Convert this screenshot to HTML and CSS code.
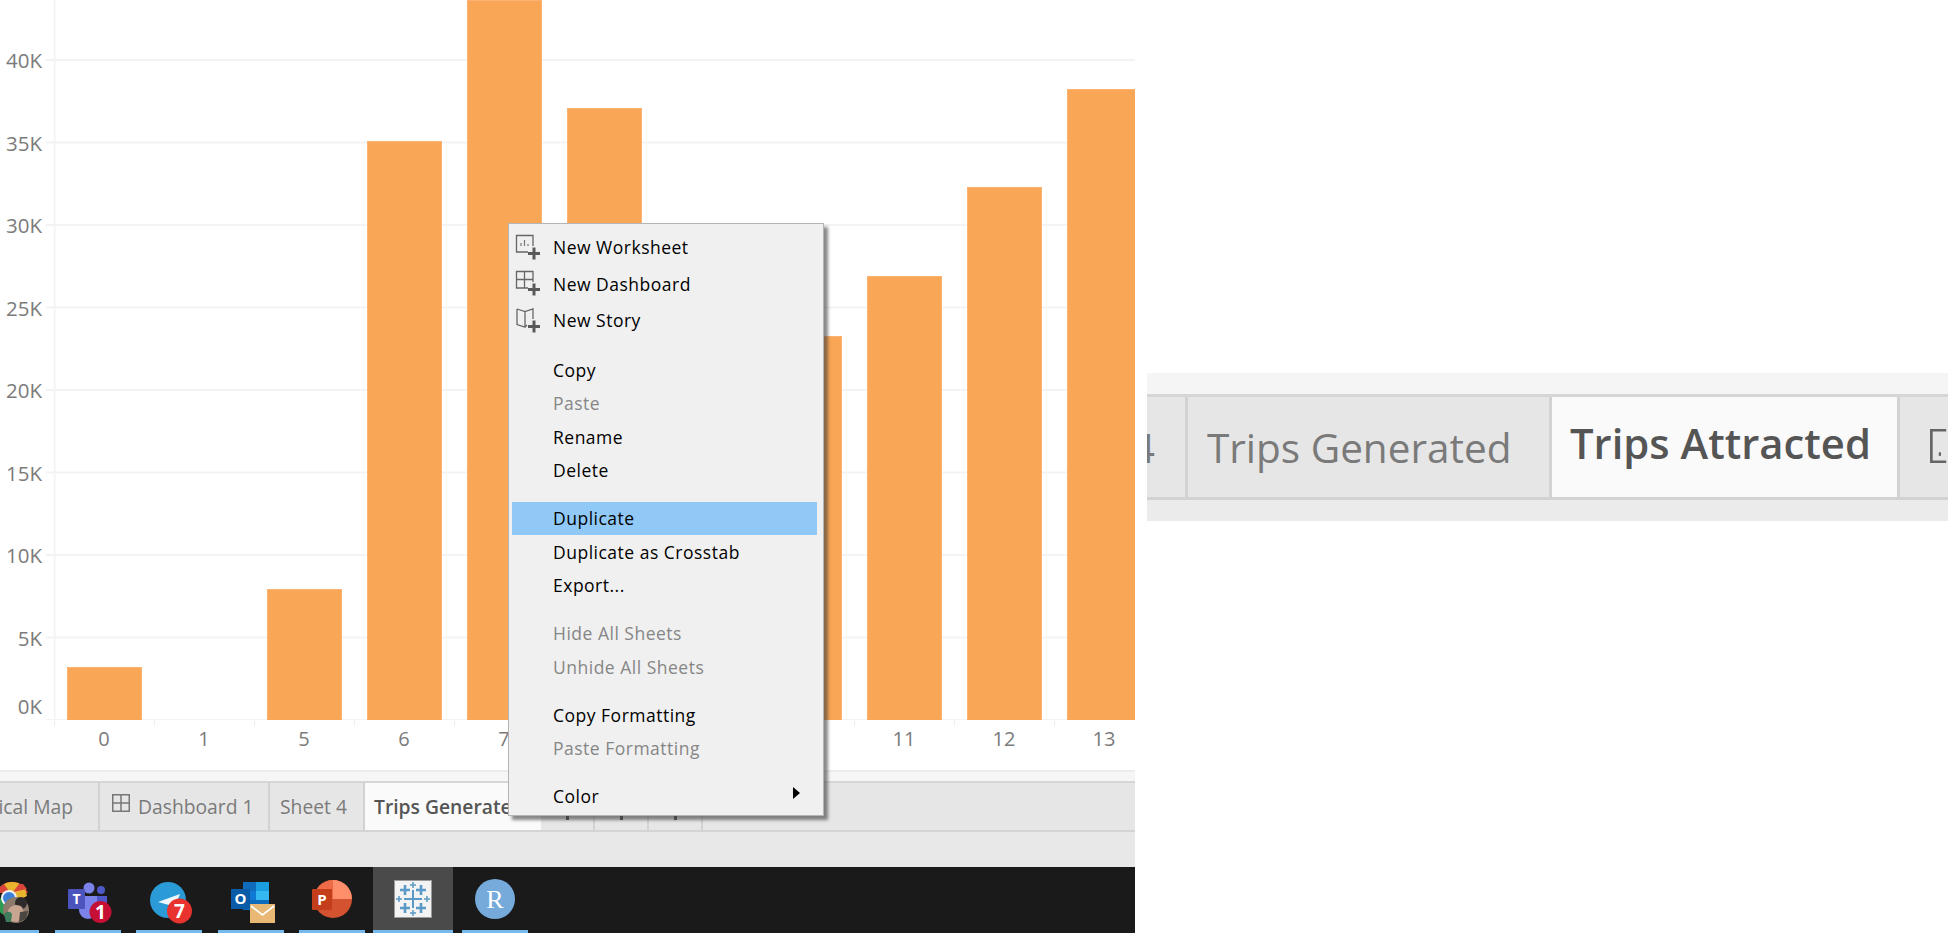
FILE: index.html
```html
<!DOCTYPE html>
<html lang="en">
<head>
<meta charset="utf-8">
<title>Trips Attracted</title>
<link rel="stylesheet" href="styles.css">
</head>
<body>
<main class="screen">
  <section class="app">
    <div class="chart">
      <div class="yaxis">
        <span class="ylabel">40K</span><span class="ylabel">35K</span><span class="ylabel">30K</span><span class="ylabel">25K</span>
        <span class="ylabel">20K</span><span class="ylabel">15K</span><span class="ylabel">10K</span><span class="ylabel">5K</span>
        <span class="ylabel zero">0K</span>
      </div>
      <div class="plotwrap">
        <div class="plot">
          <div class="col"><div class="bar" style="height:53px"></div></div>
          <div class="col"></div>
          <div class="col"><div class="bar" style="height:131px"></div></div>
          <div class="col"><div class="bar" style="height:579px"></div></div>
          <div class="col"><div class="bar" style="height:720px"></div></div>
          <div class="col"><div class="bar" style="height:612px"></div></div>
          <div class="col"><div class="bar" style="height:440px"></div></div>
          <div class="col"><div class="bar" style="height:384px"></div></div>
          <div class="col"><div class="bar" style="height:444px"></div></div>
          <div class="col"><div class="bar" style="height:533px"></div></div>
          <div class="col"><div class="bar" style="height:631px"></div></div>
        </div>
        <div class="xaxis">
          <span class="xlabel">0</span><span class="xlabel">1</span><span class="xlabel">5</span><span class="xlabel">6</span>
          <span class="xlabel">7</span><span class="xlabel"></span><span class="xlabel"></span><span class="xlabel"></span>
          <span class="xlabel">11</span><span class="xlabel">12</span><span class="xlabel">13</span>
        </div>
      </div>
    </div>
    <div class="strip"></div>
    <div class="tabs">
      <div class="tab tab-clip"><span class="tab-text">Geographical Map</span></div>
      <div class="tab tab-dash">
        <svg class="dash-icon" viewBox="0 0 18 18" width="18" height="18" aria-hidden="true"><path d="M.75.75h16.5v16.5H.75zM9 .75v16.5M.75 9h16.5" fill="none" stroke="#777" stroke-width="1.5"/></svg>
        <span class="tab-text">Dashboard 1</span>
      </div>
      <div class="tab tab-sheet"><span class="tab-text">Sheet 4</span></div>
      <div class="tab tab-active"><span class="tab-text">Trips Generated</span></div>
      <div class="tab tab-new"><i class="stem"></i></div>
      <div class="tab tab-new"><i class="stem"></i></div>
      <div class="tab tab-new"><i class="stem"></i></div>
    </div>
    <div class="band"></div>
    <div class="taskbar">
      <div class="task task-chrome">
        <svg viewBox="0 867 39 63" width="39" height="63" aria-hidden="true">
          <path d="M-4 893a17 17 0 0 1 32 0z" fill="#d9453a"/>
          <path d="M4 884a17 17 0 0 1 21 4l2 8-8 4-8-6z" fill="#e9b52f"/>
          <path d="M19 884h4l4 5-14 3z" fill="#d9453a"/>
          <path d="M-5 900a17 17 0 0 0 9 15l7-12-7-6z" fill="#2e9b52"/>
          <circle cx="9" cy="898" r="8" fill="#f3f3f3"/>
          <circle cx="9" cy="898" r="6" fill="#3c80d8"/>
          <circle cx="16" cy="910" r="13" fill="#8c7a6c"/>
          <circle cx="21" cy="903" r="6" fill="#2f2a2a"/>
          <path d="M8 910c4-6 10-6 14-3l2 6-6 9-9-1z" fill="#c8a591"/>
          <path d="M4 914c3-3 6-3 8 0l-1 8H6z" fill="#3c7c5a"/>
          <path d="M20 912l8-1-2 8-7 3z" fill="#4a4642"/>
        </svg>
      </div>
      <div class="task">
        <svg viewBox="54 867 66 63" width="66" height="63" aria-hidden="true">
          <circle cx="88" cy="888" r="5.5" fill="#7b83eb"/>
          <circle cx="100" cy="890" r="4" fill="#5059c9"/>
          <path d="M94 896h12v11a6 6 0 0 1-12 0z" fill="#5059c9"/>
          <path d="M78 896h18v14a9 9 0 0 1-18 0z" fill="#7b83eb"/>
          <rect x="67" y="889" width="17" height="20" rx="1" fill="#4b53bc"/>
          <text class="ico-t" x="75.5" y="904" text-anchor="middle">T</text>
          <circle cx="99.5" cy="912" r="11" fill="#c50f35"/>
          <text class="ico-badge" x="99.5" y="919" text-anchor="middle">1</text>
        </svg>
      </div>
      <div class="task">
        <svg viewBox="136 867 66 63" width="66" height="63" aria-hidden="true">
          <circle cx="168" cy="900" r="18" fill="#2a9bd6"/>
          <path d="M158 902l22-8-7 17-4-6z" fill="#eef7fc"/>
          <circle cx="179.500" cy="911" r="12.500" fill="#e8332e"/>
          <text class="ico-badge" x="179.500" y="918" text-anchor="middle">7</text>
        </svg>
      </div>
      <div class="task">
        <svg viewBox="217 867 66 63" width="66" height="63" aria-hidden="true">
          <rect x="242" y="882" width="26" height="28" fill="#0f6cbd"/>
          <rect x="255" y="882" width="13" height="9" fill="#1b9de2"/>
          <rect x="255" y="891" width="13" height="9" fill="#35b8f1"/>
          <rect x="242" y="891" width="13" height="9" fill="#0f78d4"/>
          <rect x="230" y="889" width="19" height="20" fill="#0a5ca8"/>
          <text class="ico-o" x="239.500" y="904" text-anchor="middle">O</text>
          <rect x="249" y="904" width="25" height="19" fill="#e8b874"/>
          <path d="M250 906l11.500 9 11.500-9" fill="none" stroke="#fff" stroke-width="1.600"/>
        </svg>
      </div>
      <div class="task">
        <svg viewBox="299 867 66 63" width="66" height="63" aria-hidden="true">
          <circle cx="333" cy="899" r="19" fill="#d35230"/>
          <path d="M333 880a19 19 0 0 1 19 19h-19z" fill="#ff8f6b"/>
          <path d="M333 880a19 19 0 0 0-19 19h19z" fill="#ed6c47"/>
          <rect x="312" y="889" width="20" height="21" rx="1" fill="#c43e1c"/>
          <text class="ico-p" x="322" y="905" text-anchor="middle">P</text>
        </svg>
      </div>
      <div class="task task-on">
        <svg viewBox="373 867 80 63" width="80" height="63" aria-hidden="true">
          <rect x="394.500" y="880.500" width="37" height="37" fill="#f3f3f3" stroke="#9a9a9a"/>
          <g fill="none" stroke="#5b9ac6">
            <path d="M413 890v18M404 899h18" stroke-width="2"/>
            <path d="M405 885v10M400 890h10M421 885v10M416 890h10M405 903v10M400 908h10M421 903v10M416 908h10" stroke-width="2.600"/>
            <path d="M413 882v6M410 885h6M413 910v6M410 913h6M399 896v6M396 899h6M427 896v6M424 899h6" stroke-width="1.500"/>
          </g>
        </svg>
      </div>
      <div class="task task-r">
        <svg viewBox="462 867 66 63" width="66" height="63" aria-hidden="true">
          <circle cx="495" cy="899" r="20" fill="#75aadb"/>
          <text class="ico-r" x="495" y="908" text-anchor="middle">R</text>
        </svg>
      </div>
    </div>
  </section>

  <section class="crop">
    <div class="crop-strip"></div>
    <div class="crop-tabs">
      <div class="ctab ctab-clip"><span>Sheet 4</span></div>
      <div class="ctab ctab-gen"><span>Trips Generated</span></div>
      <div class="ctab ctab-on"><span>Trips Attracted</span></div>
      <div class="ctab ctab-new"><svg viewBox="0 0 20 38" width="20" height="38" aria-hidden="true"><path d="M18 1.500H1.500v35H18" fill="none" stroke="#666" stroke-width="3"/><path d="M11 26v4" stroke="#666" stroke-width="2.500"/></svg></div>
    </div>
    <div class="crop-band"></div>
  </section>

  <nav class="menu">
    <div class="group">
      <div class="row row-ico">
        <svg viewBox="0 0 27 27" width="27" height="27" aria-hidden="true"><path d="M13 18H1.500V1.500H18V12" fill="none" stroke="#666" stroke-width="1.300"/><path d="M6 12V9M9.500 12V6M13 12v-2" stroke="#777" stroke-width="1.200"/><path d="M19 13.500v12M13 19.500h12" stroke="#5a5a5a" stroke-width="3"/></svg>
        <span>New Worksheet</span>
      </div>
      <div class="row row-ico">
        <svg viewBox="0 0 27 27" width="27" height="27" aria-hidden="true"><path d="M13 18H1.500V1.500H18V12M1.500 9.500H18M9.500 1.500V18" fill="none" stroke="#666" stroke-width="1.300"/><path d="M19 13.500v12M13 19.500h12" stroke="#5a5a5a" stroke-width="3"/></svg>
        <span>New Dashboard</span>
      </div>
      <div class="row row-ico">
        <svg viewBox="0 0 27 27" width="27" height="27" aria-hidden="true"><path d="M2 2l8 2.500L18 2v10M10 4.500V20L2 17.500V2M12 18l-2 2" fill="none" stroke="#666" stroke-width="1.300"/><path d="M19 13.500v12M13 19.500h12" stroke="#5a5a5a" stroke-width="3"/></svg>
        <span>New Story</span>
      </div>
    </div>
    <div class="group">
      <div class="row">Copy</div>
      <div class="row off">Paste</div>
      <div class="row">Rename</div>
      <div class="row">Delete</div>
    </div>
    <div class="group">
      <div class="row hl">Duplicate</div>
      <div class="row">Duplicate as Crosstab</div>
      <div class="row">Export...</div>
    </div>
    <div class="group">
      <div class="row off">Hide All Sheets</div>
      <div class="row off">Unhide All Sheets</div>
    </div>
    <div class="group">
      <div class="row">Copy Formatting</div>
      <div class="row off">Paste Formatting</div>
    </div>
    <div class="group">
      <div class="row row-sub">Color<i class="arrow"></i></div>
    </div>
  </nav>
</main>
</body>
</html>
```

FILE: styles.css
```css
* { box-sizing: border-box; }
html, body { margin: 0; padding: 0; background: #fff; }
body { font-family: "Open Sans", "Liberation Sans", sans-serif; }

.screen {
  position: relative;
  display: flex;
  width: 1948px;
  height: 933px;
  overflow: hidden;
  background: #fff;
}

/* left: application window */
.app { width: 1135px; flex: none; display: flex; flex-direction: column; overflow: hidden; }

.chart { display: flex; height: 770px; flex: none; background: #fff; }
.yaxis { width: 46px; flex: none; display: flex; flex-direction: column; padding-top: 19px; }
.ylabel {
  height: 82.5px;
  flex: none;
  display: flex;
  align-items: center;
  justify-content: flex-end;
  padding-right: 4px;
  font-size: 20.5px;
  color: #7b7b7b;
}
.ylabel.zero { margin-top: -14px; }

.plotwrap { width: 1089px; flex: none; overflow: hidden; }
.plot {
  height: 720px;
  padding-left: 8px;
  display: grid;
  grid-template-columns: repeat(11, 100px);
  align-items: end;
  background-image:
    linear-gradient(#f3f3f3, #f3f3f3),
    linear-gradient(to top, #f3f3f3 2px, transparent 2px);
  background-size: 1.5px 100%, 100% 82.5px;
  background-position: 8px 0, 0 calc(100% + 1px);
  background-repeat: no-repeat, repeat-y;
}
.col { height: 100%; display: flex; align-items: flex-end; padding-left: 13px; }
.bar { width: 75px; background: #f9a656; border: 1px solid #fbb272; border-bottom: 0; }

.xaxis { display: flex; margin-left: 8px; height: 50px; }
.xlabel {
  width: 100px;
  flex: none;
  padding-top: 4px;
  text-align: center;
  font-size: 20px;
  line-height: 30px;
  color: #7b7b7b;
  background: linear-gradient(#eee, #eee) 0 0 / 1px 6px no-repeat;
}

.strip { height: 13px; flex: none; background: #f6f6f6; border-top: 2px solid #ececec; border-bottom: 2px solid #d6d6d6; }

.tabs { display: flex; height: 49px; flex: none; background: #e6e6e6; border-bottom: 2px solid #d4d4d4; }
.tab {
  flex: none;
  display: flex;
  align-items: center;
  border-right: 2px solid #d2d2d2;
  font-size: 19.3px;
  color: #7a7a7a;
  overflow: hidden;
  white-space: nowrap;
}
.tab-clip { width: 100px; justify-content: flex-end; padding-right: 25px; }
.tab-clip .tab-text { flex: none; }
.tab-dash { width: 170px; padding-left: 12px; gap: 8px; }
.dash-icon { flex: none; margin-top: -7px; }
.tab-sheet { width: 95px; padding-left: 10px; }
.tab-active { width: 176px; padding-left: 9px; background: #fafafa; font-weight: 600; color: #555; border-right: 0; }
.tab-new { width: 54px; justify-content: center; align-items: flex-end; padding-bottom: 10px; }
.stem { display: block; width: 3px; height: 8px; background: #555; }

.band { height: 35px; flex: none; background: #e8e8e8; }

.taskbar { flex: 1; display: flex; gap: 15.5px; background: #1a1a1a; }
.task { width: 66px; flex: none; height: 66px; border-bottom: 3px solid #76b9ed; }
.task svg { display: block; }
.task-chrome { width: 39px; }
.task-on { width: 80px; margin-left: -7.5px; background: #4a4a4a; }
.task-r { margin-left: -6.5px; }

.ico-t { font: 700 14px "Open Sans", sans-serif; fill: #fff; }
.ico-badge { font: 700 19px "Open Sans", sans-serif; fill: #fff; }
.ico-o { font: 700 15px "Open Sans", sans-serif; fill: #fff; }
.ico-p { font: 700 15px "Open Sans", sans-serif; fill: #fff; }
.ico-r { font: 400 26px "Liberation Serif", serif; fill: #fff; }

/* right: enlarged crop of the tab strip */
.crop { flex: 1; margin-left: 12px; padding-top: 373px; display: flex; flex-direction: column; overflow: hidden; }
.crop-strip { height: 24px; flex: none; background: #f5f5f5; border-bottom: 3px solid #d6d6d6; }
.crop-tabs { display: flex; height: 103px; flex: none; background: #e6e6e6; border-bottom: 3px solid #d2d2d2; }
.ctab {
  flex: none;
  display: flex;
  align-items: center;
  border-right: 3px solid #d2d2d2;
  font-size: 40.5px;
  color: #7a7a7a;
  overflow: hidden;
  white-space: nowrap;
}
.ctab-clip { width: 41px; justify-content: flex-end; padding-right: 30px; }
.ctab-clip span { flex: none; }
.ctab-gen { width: 364px; padding-left: 19px; }
.ctab-on { width: 348px; padding-left: 18px; padding-bottom: 10px; background: #fafafa; font-size: 41.8px; font-weight: 600; color: #555; }
.ctab-new { width: 48px; padding-left: 30px; padding-bottom: 2px; border-right: 0; }
.crop-band { height: 21px; flex: none; background: #ebebeb; }

/* context menu */
.menu {
  position: absolute;
  left: 508px;
  top: 223px;
  width: 316px;
  height: 593px;
  padding: 5px 6px 0 3px;
  background: #f0f0f0;
  border: 1px solid #b4b4b4;
  box-shadow: 4px 4px 3px rgba(60, 60, 60, .6);
  font-size: 17.5px;
  letter-spacing: .5px;
  color: #000;
}
.group + .group { margin-top: 15px; }
.row { height: 33.3px; padding-left: 41px; display: flex; align-items: center; }
.row-ico { height: 36.5px; padding-left: 3px; gap: 11px; }
.row-ico svg { flex: none; }
.off { color: #868686; }
.hl { background: #90c8f6; }
.row-sub { justify-content: space-between; padding-right: 17px; }
.arrow {
  width: 0;
  height: 0;
  margin-top: -6px;
  border-left: 7px solid #000;
  border-top: 6px solid transparent;
  border-bottom: 6px solid transparent;
}
```
